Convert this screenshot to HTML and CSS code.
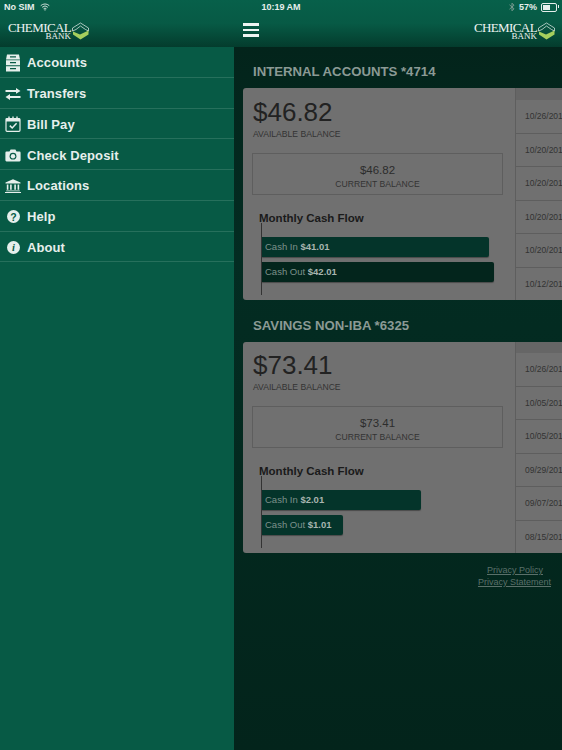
FILE: index.html
```html
<!DOCTYPE html>
<html lang="en">

<head>
    <meta charset="UTF-8">
    <meta name="viewport" content="width=device-width, initial-scale=1.0">
    <title>Chemical Bank</title>
    <link rel="stylesheet" href="styles.css">
</head>

<body>
    <svg class="defs" width="0" height="0">
        <symbol id="hex" viewBox="0 0 19 18">
            <path d="M1.5 9 L1.5 6 L9.5 1 L17.5 6 L17.5 9 L14.5 7.5 L9.5 4 L5 7.5 Z" fill="none" stroke="#cfe0da" stroke-width="0.8"/>
            <path d="M2 9.5 L9 12.5 L17.5 8.5 L17.5 12.5 L9.5 17.5 L2 12.5 Z" fill="#a5cf5d"/>
        </symbol>
    </svg>

    <header class="topbar">
        <div class="status">
            <div class="status-left">
                <span>No SIM</span>
                <svg class="wifi" width="10" height="8" viewBox="0 0 11 9">
                    <path d="M0.7 3 A7 7 0 0 1 10.3 3 M2.3 4.8 A4.6 4.6 0 0 1 8.7 4.8 M3.9 6.5 A2.3 2.3 0 0 1 7.1 6.5" fill="none" stroke="#dfeae6" stroke-width="1"/>
                    <path d="M5.5 8.8 L4.5 7.6 A1.4 1.4 0 0 1 6.5 7.6 Z" fill="#dfeae6"/>
                </svg>
            </div>
            <div class="status-time">10:19 AM</div>
            <div class="status-right">
                <svg class="bt" width="6" height="10" viewBox="0 0 6 10">
                    <path d="M0.5 2.8 L5 6.8 L3 8.8 L3 1.2 L5 3.2 L0.5 7.2" fill="none" stroke="#7f9d94" stroke-width="0.9"/>
                </svg>
                <span>57%</span>
                <div class="battery"><div class="battery-fill"></div></div>
            </div>
        </div>
        <div class="navbar">
            <div class="brand-col">
                <div class="logo">
                    <div class="logo-text">
                        <span class="logo-name">CHEMICAL</span>
                        <span class="logo-bank">BANK</span>
                    </div>
                    <svg class="logo-mark" width="19" height="18"><use href="#hex"/></svg>
                </div>
            </div>
            <div class="nav-main">
                <div class="burger"><i></i><i></i><i></i></div>
                <div class="logo">
                    <div class="logo-text">
                        <span class="logo-name">CHEMICAL</span>
                        <span class="logo-bank">BANK</span>
                    </div>
                    <svg class="logo-mark" width="19" height="18"><use href="#hex"/></svg>
                </div>
            </div>
        </div>
    </header>

    <div class="content">
        <nav class="sidebar">
            <a class="menu-item">
                <svg class="menu-icon" width="16" height="18" viewBox="-0.5 0 16 18">
                    <path d="M1.5 0.5 H13.5 L14.5 5.4 H0.5 Z M0.5 6.3 H14.5 V11.3 H0.5 Z M0.5 12.2 H14.5 V17.5 H0.5 Z" fill="#e6efec"/>
                    <path d="M4.5 2.8 H10.5 M4.5 8.7 H10.5 M4.5 14.7 H10.5" stroke="#0a5a46" stroke-width="1.2"/>
                </svg>
                Accounts
            </a>
            <a class="menu-item">
                <svg class="menu-icon" width="16" height="12" viewBox="0 0 16 12">
                    <path d="M0.5 2 H11 V0 L15.5 3 L11 5.8 V4 H0.5 Z" fill="#e6efec"/>
                    <path d="M15.5 8 H5 V6 L0.5 9 L5 12 V10 H15.5 Z" fill="#e6efec"/>
                </svg>
                Transfers
            </a>
            <a class="menu-item">
                <svg class="menu-icon" width="16" height="16" viewBox="0 0 16 16">
                    <rect x="1" y="2.5" width="14" height="12.8" rx="1" fill="none" stroke="#e6efec" stroke-width="1.2"/>
                    <path d="M1 2.5 H15 V5.5 H1 Z" fill="#e6efec"/>
                    <path d="M4 0.5 V3 M8 0.5 V3 M12 0.5 V3" stroke="#e6efec" stroke-width="1.4"/>
                    <path d="M4.8 9.6 L7.2 12 L11.6 7.2" fill="none" stroke="#e6efec" stroke-width="1.5"/>
                </svg>
                Bill Pay
            </a>
            <a class="menu-item">
                <svg class="menu-icon" width="16" height="13" viewBox="0 0 16 13">
                    <path d="M1.5 2.5 H4.5 L5.6 0.5 H10.4 L11.5 2.5 H14.5 A1.2 1.2 0 0 1 15.6 3.7 V11.3 A1.2 1.2 0 0 1 14.5 12.5 H1.5 A1.2 1.2 0 0 1 0.4 11.3 V3.7 A1.2 1.2 0 0 1 1.5 2.5 Z" fill="#e6efec"/>
                    <circle cx="8" cy="7.2" r="3.4" fill="#0a5a46"/>
                    <circle cx="8" cy="7.2" r="2.2" fill="#e6efec"/>
                </svg>
                Check Deposit
            </a>
            <a class="menu-item">
                <svg class="menu-icon" width="16" height="14" viewBox="0 0 16 14">
                    <path d="M8 0.3 L15.5 3.6 V4.6 H0.5 V3.6 Z" fill="#e6efec"/>
                    <path d="M2.6 5.5 V10.8 M5.9 5.5 V10.8 M10.1 5.5 V10.8 M13.4 5.5 V10.8" stroke="#e6efec" stroke-width="1.6"/>
                    <path d="M1.2 11.5 H14.8 V12.3 H1.2 Z M0 13 H16 V14 H0 Z" fill="#e6efec"/>
                </svg>
                Locations
            </a>
            <a class="menu-item">
                <span class="round-icon">?</span>
                Help
            </a>
            <a class="menu-item">
                <span class="round-icon round-info">i</span>
                About
            </a>
        </nav>

        <main class="main">
            <section class="account">
                <h2 class="account-title">INTERNAL ACCOUNTS *4714</h2>
                <div class="card">
                    <div class="card-left">
                        <div class="big-amount">$46.82</div>
                        <div class="small-label">AVAILABLE BALANCE</div>
                        <div class="balance-box">
                            <div class="box-amount">$46.82</div>
                            <div class="small-label box-label">CURRENT BALANCE</div>
                        </div>
                        <h3 class="flow-title">Monthly Cash Flow</h3>
                        <div class="flow">
                            <div class="bar bar-in" style="width: 227px">Cash In <b>$41.01</b></div>
                            <div class="bar bar-out" style="width: 232px">Cash Out <b>$42.01</b></div>
                        </div>
                    </div>
                    <div class="dates">
                        <div class="date">10/26/2016</div>
                        <div class="date">10/20/2016</div>
                        <div class="date">10/20/2016</div>
                        <div class="date">10/20/2016</div>
                        <div class="date">10/20/2016</div>
                        <div class="date">10/12/2016</div>
                    </div>
                </div>
            </section>

            <section class="account">
                <h2 class="account-title">SAVINGS NON-IBA *6325</h2>
                <div class="card">
                    <div class="card-left">
                        <div class="big-amount">$73.41</div>
                        <div class="small-label">AVAILABLE BALANCE</div>
                        <div class="balance-box">
                            <div class="box-amount">$73.41</div>
                            <div class="small-label box-label">CURRENT BALANCE</div>
                        </div>
                        <h3 class="flow-title">Monthly Cash Flow</h3>
                        <div class="flow">
                            <div class="bar bar-in" style="width: 159px">Cash In <b>$2.01</b></div>
                            <div class="bar bar-in" style="width: 81px">Cash Out <b>$1.01</b></div>
                        </div>
                    </div>
                    <div class="dates">
                        <div class="date">10/26/2016</div>
                        <div class="date">10/05/2016</div>
                        <div class="date">10/05/2016</div>
                        <div class="date">09/29/2016</div>
                        <div class="date">09/07/2016</div>
                        <div class="date">08/15/2016</div>
                    </div>
                </div>
            </section>

            <footer class="links">
                <a>Privacy Policy</a>
                <a>Privacy Statement</a>
            </footer>
        </main>
    </div>
</body>

</html>
```

FILE: styles.css
```css
html,
body {
    height: 100%;
}

body {
    display: flex;
    flex-direction: column;
    margin: 0;
    overflow: hidden;
    font-family: "Liberation Sans", Arial, sans-serif;
    background-color: #075a45;
}

.defs {
    position: absolute;
}

/* top bar */
.topbar {
    height: 47px;
    flex: none;
    background: linear-gradient(to bottom, #07604a 0%, #075a45 50%, #043c2d 100%);
    color: #e6efec;
}

.status {
    display: grid;
    grid-template-columns: 1fr auto 1fr;
    align-items: center;
    height: 14px;
    padding: 0 4px;
    font-size: 9px;
    font-weight: bold;
}

.status-left {
    display: flex;
    align-items: center;
    gap: 5px;
}

.status-right {
    display: flex;
    align-items: center;
    justify-content: flex-end;
    gap: 4px;
}

.battery {
    position: relative;
    width: 12px;
    height: 5px;
    padding: 1px;
    margin-right: 1px;
    border: 1px solid #e6efec;
    border-radius: 2px;
}

.battery::after {
    content: "";
    position: absolute;
    top: 1px;
    right: -3px;
    width: 1px;
    height: 3px;
    background-color: #e6efec;
}

.battery-fill {
    width: 57%;
    height: 100%;
    background-color: #e6efec;
}

.navbar {
    display: flex;
    height: 33px;
}

.brand-col {
    width: 234px;
    padding-left: 8px;
    box-sizing: border-box;
}

.nav-main {
    display: flex;
    flex: 1;
    justify-content: space-between;
    padding: 0 6px 0 9px;
}

.burger {
    display: flex;
    flex-direction: column;
    justify-content: center;
    gap: 3px;
    width: 16px;
    height: 32px;
}

.burger i {
    display: block;
    height: 2.5px;
    background-color: #eef4f2;
}

.logo {
    display: flex;
    align-items: center;
    height: 34px;
}

.logo-text {
    display: flex;
    flex-direction: column;
    align-items: flex-end;
    font-family: "Liberation Serif", "Times New Roman", serif;
    color: #eef4f2;
}

.logo-name {
    font-size: 13px;
    line-height: 10px;
    letter-spacing: -0.6px;
}

.logo-bank {
    font-size: 9px;
    line-height: 7px;
}

/* page body */
.content {
    display: flex;
    flex: 1;
    min-height: 0;
}

.sidebar {
    width: 234px;
    flex: none;
    background-color: #075a45;
}

.menu-item {
    display: flex;
    align-items: center;
    gap: 6px;
    box-sizing: border-box;
    height: 30.75px;
    padding: 2px 0 0 5px;
    border-bottom: 1px solid #26705c;
    font-size: 13px;
    letter-spacing: 0.1px;
    font-weight: bold;
    color: #e6efec;
}

.menu-icon {
    width: 16px;
    flex: none;
}

.round-icon {
    display: flex;
    align-items: center;
    justify-content: center;
    width: 13px;
    height: 13px;
    margin: 0 1px 0 2px;
    border-radius: 50%;
    background-color: #e6efec;
    color: #075a45;
    font-size: 10.5px;
    font-weight: bold;
}

.round-info {
    font-family: "Liberation Serif", serif;
    font-style: italic;
}

.main {
    flex: 1;
    min-width: 0;
    padding-left: 9px;
    background: linear-gradient(to bottom, #03241b 0%, #032c22 30%, #032a20 50%, #03241b 100%);
}

.account-title {
    margin: 0;
    padding: 17px 0 9px 10px;
    height: 15px;
    line-height: 15px;
    font-size: 13.2px;
    font-weight: bold;
    color: #8b9a95;
}

.account + .account {
    margin-top: 1px;
}

.card {
    display: flex;
    height: 212px;
    background-color: #707070;
    border-radius: 3px 0 0 3px;
    overflow: hidden;
    color: #222;
}

.account + .account .card {
    height: 211px;
}

.card-left {
    width: 273px;
    flex: none;
    box-sizing: border-box;
    padding: 9px 0 0 10px;
    border-right: 1px solid #5e5e5e;
}

.account + .account .card-left {
    padding-top: 8px;
}

.big-amount {
    font-size: 26px;
    line-height: 30px;
}

.small-label {
    font-size: 8.6px;
    line-height: 11px;
    margin-top: 2px;
    color: #333;
}

.balance-box {
    box-sizing: border-box;
    width: 251px;
    height: 42px;
    margin: 13px 0 0 -1px;
    padding-top: 9px;
    border: 1px solid #5e5e5e;
    text-align: center;
}

.box-amount {
    font-size: 11.5px;
    line-height: 14px;
    color: #2c2c2c;
}

.box-label {
    margin-top: 2px;
}

.flow-title {
    margin: 16px 0 0 6px;
    font-size: 11.5px;
    line-height: 14px;
    color: #1a1a1a;
}

.flow {
    display: flex;
    flex-direction: column;
    gap: 5px;
    height: 72px;
    box-sizing: border-box;
    margin: -2px 0 0 8px;
    padding-top: 14px;
    border-left: 1px solid #333;
}

.bar {
    box-sizing: border-box;
    height: 20px;
    padding-left: 3px;
    line-height: 20px;
    font-size: 9.5px;
    color: #7d918a;
    border-radius: 0 2px 2px 0;
    box-shadow: 0 1px 1px #4a4a4a;
}

.bar b {
    color: #a8b5b0;
}

.bar-in {
    background-color: #04342a;
}

.bar-out {
    background-color: #03251c;
}

.dates {
    flex: 1;
    min-width: 0;
    padding-top: 12px;
    background-color: #666;
}

.account + .account .dates {
    padding-top: 11px;
}

.date {
    display: flex;
    align-items: center;
    box-sizing: border-box;
    height: 33.5px;
    padding-left: 9px;
    border-bottom: 1px solid #5e5e5e;
    background-color: #707070;
    font-size: 8.5px;
    color: #333;
    white-space: nowrap;
    overflow: hidden;
}

.date:last-child {
    border-bottom: none;
}

.links {
    display: flex;
    flex-direction: column;
    align-items: flex-end;
    padding: 11px 11px 0 0;
    font-size: 9px;
    line-height: 12px;
    color: #5a706a;
}

.links a {
    text-decoration: underline;
}

.links a:first-child {
    margin-right: 8px;
}
```
